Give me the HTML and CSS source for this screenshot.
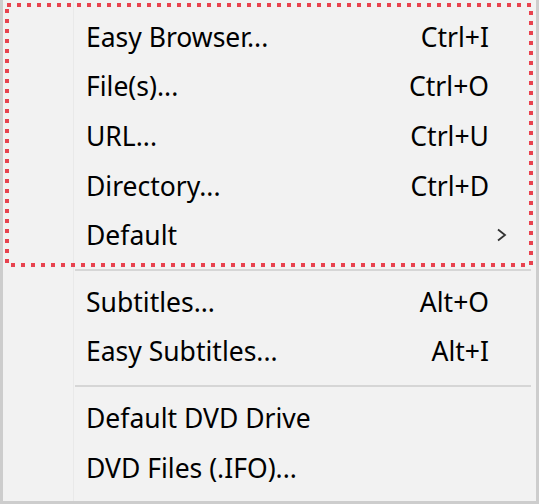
FILE: index.html
```html
<!DOCTYPE html>
<html>
<head>
<meta charset="utf-8">
<link rel="stylesheet" href="styles.css">
</head>
<body>
<div class="menu">
  <div class="gutter"></div>
  <div class="items">
    <div class="item"><span class="label">Easy Browser...</span><span class="key">Ctrl+I</span></div>
    <div class="item"><span class="label">File(s)...</span><span class="key">Ctrl+O</span></div>
    <div class="item"><span class="label">URL...</span><span class="key">Ctrl+U</span></div>
    <div class="item"><span class="label">Directory...</span><span class="key">Ctrl+D</span></div>
    <div class="item"><span class="label">Default</span><svg class="arrow" width="12" height="16" viewBox="0 0 12 16"><polyline points="2,2.5 9,8 2,13.5" fill="none" stroke="#333" stroke-width="1.8"/></svg></div>
    <div class="sep"></div>
    <div class="item"><span class="label">Subtitles...</span><span class="key">Alt+O</span></div>
    <div class="item"><span class="label">Easy Subtitles...</span><span class="key">Alt+I</span></div>
    <div class="sep"></div>
    <div class="item"><span class="label">Default DVD Drive</span></div>
    <div class="item"><span class="label">DVD Files (.IFO)...</span></div>
  </div>
  <svg class="highlight" width="539" height="270" viewBox="0 0 539 270">
    <rect x="7" y="5" width="524" height="260" fill="none" stroke="#e8434f" stroke-width="4" stroke-dasharray="4 6"/>
  </svg>
</div>
</body>
</html>
```
FILE: styles.css
```css
html, body {
  margin: 0;
  padding: 0;
  background: #f2f2f2;
}
.menu {
  position: relative;
  width: 539px;
  height: 504px;
  box-sizing: border-box;
  background: #f2f2f2;
  border-left: 3px solid #cdcdcd;
  border-right: 3px solid #cdcdcd;
  border-bottom: 3px solid #cdcdcd;
  display: flex;
  font-family: "Noto Sans", "Open Sans", sans-serif;
  font-size: 26.5px;
  color: #000;
}
.gutter {
  width: 70px;
  flex: none;
  border-right: 1px solid #e9e9e9;
}
.items {
  flex: 1;
  padding-top: 12px;
  display: flex;
  flex-direction: column;
}
.item {
  height: 49.6px;
  display: flex;
  align-items: center;
  padding-left: 12px;
  padding-right: 47px;
}
.label {
  flex: 1;
  white-space: nowrap;
}
.key {
  flex: none;
}
.arrow {
  flex: none;
  margin-right: -19px;
}
.sep {
  height: 17px;
  box-sizing: border-box;
  padding-top: 9px;
  margin-left: 1px;
  margin-right: 5px;
}
.sep::before {
  content: "";
  display: block;
  height: 2px;
  background: #d6d6d6;
}
.highlight {
  position: absolute;
  left: -3px;
  top: 0;
  pointer-events: none;
}
```
